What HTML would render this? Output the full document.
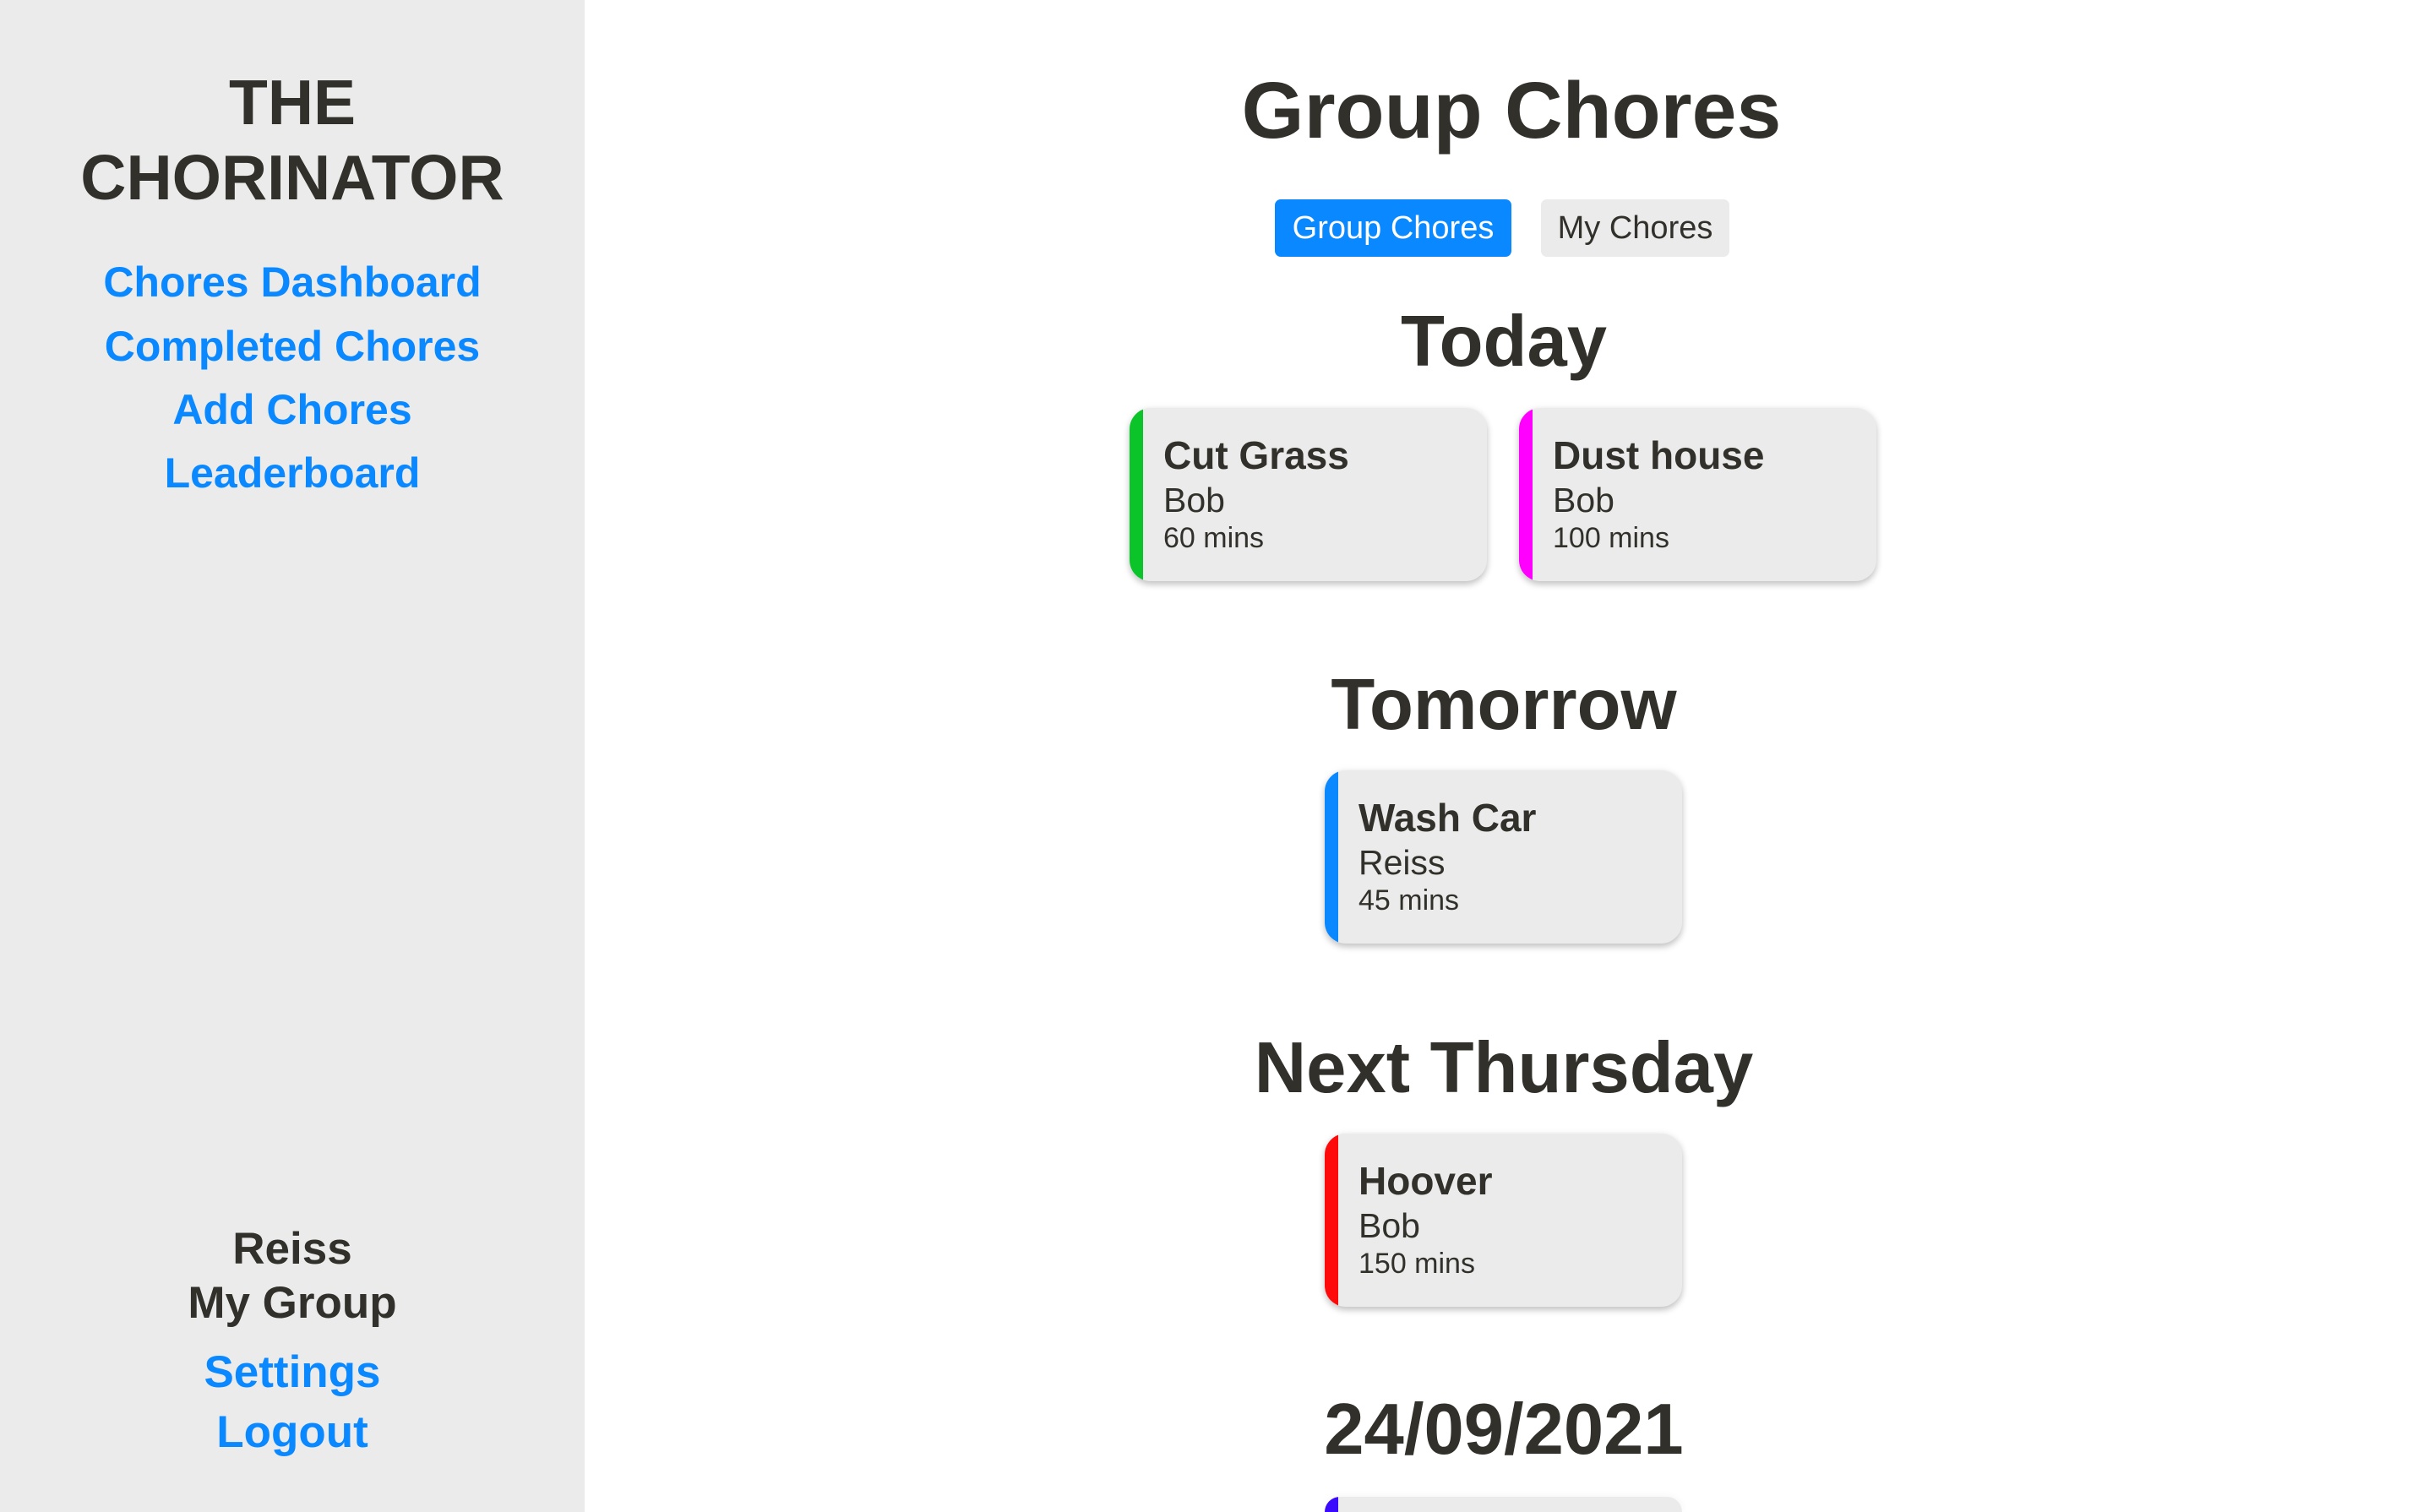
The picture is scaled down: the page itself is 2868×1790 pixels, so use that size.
<!DOCTYPE html>
<html><head><meta charset="utf-8"><style>
*{margin:0;padding:0;box-sizing:border-box}
html,body{width:2868px;height:1790px;overflow:hidden;background:#fff;font-family:"Liberation Sans",Arial,sans-serif;color:#31302b}
#w{position:relative;width:2868px;height:1790px;overflow:hidden}
.side{position:absolute;left:0;top:0;width:692px;height:1790px;background:#ebebeb}
.t{position:absolute;white-space:nowrap;line-height:1}
.c{text-align:center}
.b{font-weight:bold}
.blue{color:#0a88ff}
.card{position:absolute;width:423px;height:205px;background:#ebebeb;border-radius:25px;box-shadow:0 4px 8px rgba(0,0,0,.22),0 0 10px rgba(0,0,0,.05);overflow:hidden}
.card .bar{position:absolute;left:0;top:0;bottom:0;width:16px}
.card .n{position:absolute;left:40px;top:33px;font-size:46px;font-weight:bold;line-height:1}
.card .p{position:absolute;left:40px;top:89px;font-size:41px;line-height:1}
.card .m{position:absolute;left:40px;top:137px;font-size:34px;line-height:1}
.btn{position:absolute;top:236px;height:68px;border-radius:7px;font-size:38px;line-height:68px;text-align:center}
</style></head><body><div id="w">
<div class="side">
  <div class="t c b" style="left:0;width:692px;top:84px;font-size:75px">THE</div>
  <div class="t c b" style="left:0;width:692px;top:173px;font-size:75px">CHORINATOR</div>
  <div class="t c b blue" style="left:0;width:692px;top:309px;font-size:50px">Chores Dashboard</div>
  <div class="t c b blue" style="left:0;width:692px;top:385px;font-size:50px">Completed Chores</div>
  <div class="t c b blue" style="left:0;width:692px;top:460px;font-size:50px">Add Chores</div>
  <div class="t c b blue" style="left:0;width:692px;top:535px;font-size:50px">Leaderboard</div>
  <div class="t c b" style="left:0;width:692px;top:1452px;font-size:53px">Reiss</div>
  <div class="t c b" style="left:0;width:692px;top:1516px;font-size:53px">My Group</div>
  <div class="t c b blue" style="left:0;width:692px;top:1598px;font-size:53px">Settings</div>
  <div class="t c b blue" style="left:0;width:692px;top:1669px;font-size:53px">Logout</div>
</div>

<div class="t c b" style="left:1289px;width:1000px;top:84px;font-size:95px">Group Chores</div>
<div class="btn" style="left:1509px;width:280px;background:#0a88ff;color:#fff">Group Chores</div>
<div class="btn" style="left:1824px;width:223px;background:#ebebeb">My Chores</div>

<div class="t c b" style="left:1280px;width:1000px;top:362px;font-size:85px">Today</div>
<div class="card" style="left:1337px;top:483px"><div class="bar" style="background:#0ac42a"></div><div class="n">Cut Grass</div><div class="p">Bob</div><div class="m">60 mins</div></div>
<div class="card" style="left:1798px;top:483px"><div class="bar" style="background:#ff00ff"></div><div class="n">Dust house</div><div class="p">Bob</div><div class="m">100 mins</div></div>

<div class="t c b" style="left:1280px;width:1000px;top:792px;font-size:85px">Tomorrow</div>
<div class="card" style="left:1568px;top:912px"><div class="bar" style="background:#0a88ff"></div><div class="n">Wash Car</div><div class="p">Reiss</div><div class="m">45 mins</div></div>

<div class="t c b" style="left:1280px;width:1000px;top:1222px;font-size:85px">Next Thursday</div>
<div class="card" style="left:1568px;top:1342px"><div class="bar" style="background:#ff0a0a"></div><div class="n">Hoover</div><div class="p">Bob</div><div class="m">150 mins</div></div>

<div class="t c b" style="left:1280px;width:1000px;top:1650px;font-size:85px">24/09/2021</div>
<div class="card" style="left:1568px;top:1772px;height:18px;border-radius:25px 25px 0 0;box-shadow:0 0 10px rgba(0,0,0,.05)"><div class="bar" style="background:#3a0aff"></div></div>
</div></body></html>
